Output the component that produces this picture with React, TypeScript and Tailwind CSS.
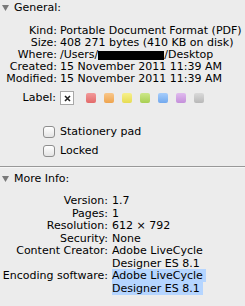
import React from "react";

const font = { fontFamily: '"DejaVu Sans", "Liberation Sans", sans-serif' };

function Tri() {
  return (
    <svg width="7" height="6" viewBox="0 0 7 6" className="shrink-0">
      <polygon points="0,0 7,0 3.5,6" fill="#7a7a7a" />
    </svg>
  );
}

function Row({ label, children }: { label: string; children: React.ReactNode }) {
  return (
    <div className="flex h-[12px] items-center whitespace-nowrap">
      <div className="w-[60px] shrink-0 text-right pr-[3px]">{label}</div>
      <div>{children}</div>
    </div>
  );
}

function Row2({ label, children }: { label: string; children: React.ReactNode }) {
  return (
    <div className="flex whitespace-nowrap">
      <div className="w-[112px] shrink-0 text-right pr-[4px]">{label}</div>
      <div>{children}</div>
    </div>
  );
}

const labels = [
  ["#f29a9a", "#e36a6a"],
  ["#f9c78a", "#eea44e"],
  ["#f7f08c", "#e6dc52"],
  ["#cde78a", "#a8cf52"],
  ["#a6cdfb", "#72a9ee"],
  ["#e0bbee", "#c48fda"],
  ["#dadada", "#b8b8b8"],
];

function Checkbox() {
  return (
    <div className="w-[12px] h-[12px] rounded-[3px] border border-[#8e8e8e] bg-gradient-to-b from-white to-[#e4e4e4] shrink-0" />
  );
}

export default function App() {
  return (
    <div className="w-[245px] h-[306px] bg-[#ececec] text-[11px] text-black overflow-hidden" style={font}>
      <div className="flex items-center h-[16px] pl-[2px] gap-[5px]">
        <Tri />
        <span>General:</span>
      </div>
      <div className="mt-[9px]">
        <Row label="Kind:">Portable Document Format (PDF)</Row>
        <Row label="Size:">408 271 bytes (410 KB on disk)</Row>
        <Row label="Where:">
          <span className="flex items-center">
            /Users/<span className="inline-block w-[66px] h-[9px] bg-black" />/Desktop
          </span>
        </Row>
        <Row label="Created:">15 November 2011 11:39 AM</Row>
        <Row label="Modified:">15 November 2011 11:39 AM</Row>
      </div>
      <div className="flex items-center h-[16px] mt-[5px]">
        <div className="w-[60px] text-right pr-[4px]">Label:</div>
        <div className="w-[14px] h-[14px] border border-[#a8a8a8] bg-white flex items-center justify-center">
          <svg width="7" height="7" viewBox="0 0 7 7">
            <path d="M1 1 L6 6 M6 1 L1 6" stroke="#222" strokeWidth="1.6" />
          </svg>
        </div>
        <div className="flex gap-[8px] ml-[12px]">
          {labels.map(([a, b], i) => (
            <div
              key={i}
              className="w-[10px] h-[10px] rounded-[2px]"
              style={{ background: `linear-gradient(${a}, ${b})` }}
            />
          ))}
        </div>
      </div>
      <div className="mt-[18px] pl-[43px] flex flex-col gap-[3px]">
        <div className="flex items-center h-[16px] gap-[5px]">
          <Checkbox />
          <span>Stationery pad</span>
        </div>
        <div className="flex items-center h-[16px] gap-[5px]">
          <Checkbox />
          <span>Locked</span>
        </div>
      </div>
      <div className="mt-[7px] h-[1px] bg-[#989898]" />
      <div className="h-[1px] bg-[#f6f6f6]" />
      <div className="flex items-center h-[16px] pl-[2px] gap-[5px] mt-[3px]">
        <Tri />
        <span>More Info:</span>
      </div>
      <div className="mt-[8px] leading-[12.5px]">
        <Row2 label="Version:">1.7</Row2>
        <Row2 label="Pages:">1</Row2>
        <Row2 label="Resolution:">612 × 792</Row2>
        <Row2 label="Security:">None</Row2>
        <Row2 label="Content Creator:">
          <div>Adobe LiveCycle</div>
          <div>Designer ES 8.1</div>
        </Row2>
        <Row2 label="Encoding software:">
          <div><span className="bg-[#b5d5ff] pr-[3px]">Adobe LiveCycle</span></div>
          <div><span className="bg-[#b5d5ff] pr-[3px]">Designer ES 8.1</span></div>
        </Row2>
      </div>
    </div>
  );
}
